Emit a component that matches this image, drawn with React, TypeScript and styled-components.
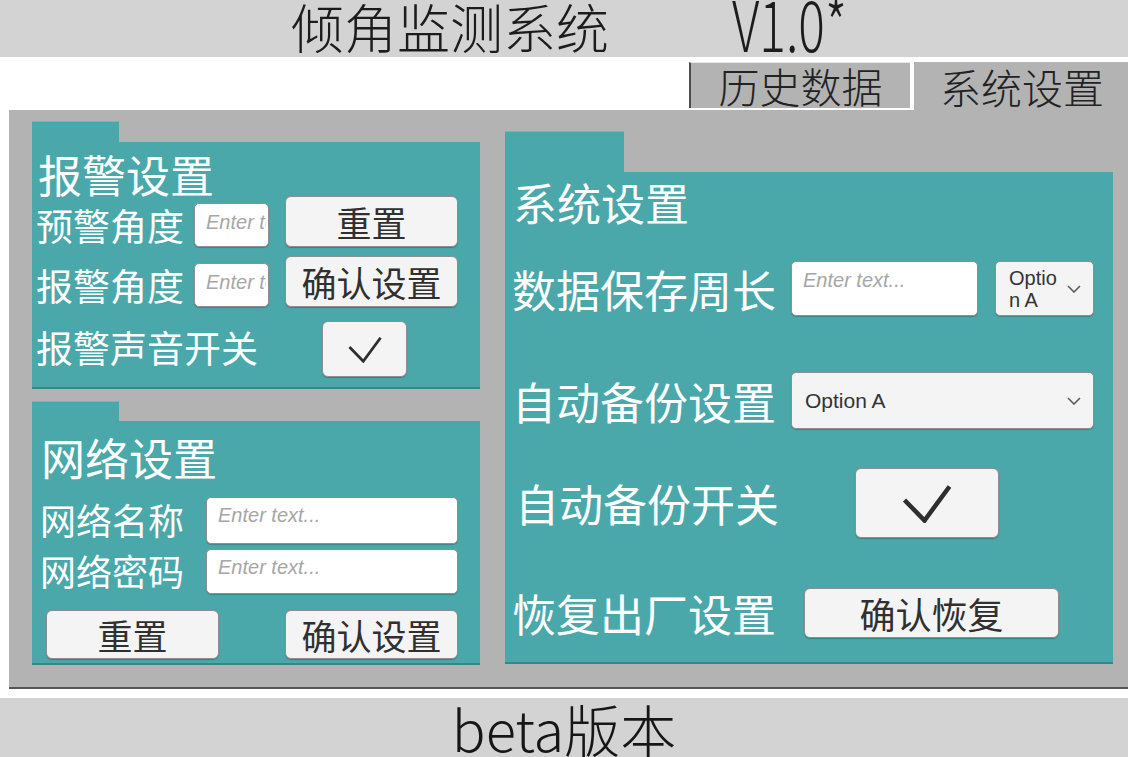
import React from 'react';
import styled, { createGlobalStyle } from 'styled-components';

const CJK = `'Noto Sans CJK SC', 'Noto Sans', sans-serif`;
const CJK_LIGHT = `'Noto Sans CJK SC Light', 'Noto Sans CJK SC DemiLight', 'Noto Sans CJK SC', 'Noto Sans', sans-serif`;
const LATIN = `'Liberation Sans', Arial, sans-serif`;
const TEAL = '#4aa8aa';
const GREY = '#b3b3b3';

const GlobalStyle = createGlobalStyle`
	html, body {
		margin: 0;
		padding: 0;
		background: #fff;
	}
	body {
		font-family: ${CJK};
	}
`;

const Screen = styled.div`
	width: 1128px;
	height: 757px;
	display: flex;
	flex-direction: column;
	background: #fff;
	overflow: hidden;
`;

const Header = styled.header`
	flex: none;
	height: 57px;
	box-sizing: border-box;
	padding-left: 12px;
	display: flex;
	justify-content: center;
	align-items: center;
	background: #d3d3d3;
	color: #1c1c1c;
	font-family: ${CJK_LIGHT};
	font-weight: 300;
	white-space: nowrap;
`;

const HeaderTitle = styled.span`
	font-size: 53px;
	line-height: 57px;
	margin-bottom: 5px;
`;

const Version = styled.span`
	display: inline-block;
	font-size: 70px;
	line-height: 57px;
	margin: 0 -45px 14px 123px;
	transform: scaleX(0.71);
	transform-origin: left center;
`;

const TabBar = styled.nav`
	flex: none;
	height: 53px;
	box-sizing: border-box;
	padding-top: 5px;
	display: flex;
	justify-content: flex-end;
	align-items: flex-start;
	gap: 4px;
	background: #fff;
`;

const Tab = styled.div<{ $active?: boolean }>`
	width: ${(p) => (p.$active ? 214 : 221)}px;
	height: ${(p) => (p.$active ? 48 : 46)}px;
	box-sizing: border-box;
	border-left: 2px solid ${(p) => (p.$active ? GREY : '#4d4d4d')};
	border-top: 1px solid ${(p) => (p.$active ? GREY : '#e9e9e9')};
	background: ${GREY};
	display: flex;
	justify-content: center;
	align-items: center;
	color: #222;
	font-family: ${CJK_LIGHT};
	font-size: 41px;
	line-height: 41px;
`;

const Workspace = styled.main`
	flex: none;
	height: 579px;
	box-sizing: border-box;
	margin-left: 9px;
	padding: 11px 0 0 23px;
	display: flex;
	align-items: flex-start;
	gap: 25px;
	background: ${GREY};
	border-bottom: 2px solid #555;
`;

const Spacer = styled.div`
	flex: none;
	height: 9px;
`;

const Footer = styled.footer`
	flex: none;
	height: 59px;
	display: flex;
	justify-content: center;
	background: #d3d3d3;
	color: #161616;
	font-family: ${CJK_LIGHT};
	font-size: 56px;
	line-height: 59px;
	font-weight: 300;
`;

const Column = styled.div<{ $top?: number }>`
	display: flex;
	flex-direction: column;
	gap: 12px;
	margin-top: ${(p) => p.$top ?? 0}px;
`;

const Folder = styled.section<{ $w: number }>`
	width: ${(p) => p.$w}px;
	display: flex;
	flex-direction: column;
`;

const FolderTab = styled.div<{ $w: number; $h: number }>`
	width: ${(p) => p.$w}px;
	height: ${(p) => p.$h}px;
	box-sizing: border-box;
	background: ${TEAL};
	border-top: 1px solid #5fc0c2;
`;

const FolderBody = styled.div<{ $h: number; $pad: number }>`
	height: ${(p) => p.$h}px;
	box-sizing: border-box;
	padding-left: ${(p) => p.$pad}px;
	display: flex;
	flex-direction: column;
	background: ${TEAL};
	border-bottom: 2px solid #3a8587;
	color: #fff;
`;

const PanelTitle = styled.h2<{ $top: number; $left?: number }>`
	margin: ${(p) => p.$top}px 0 0 ${(p) => p.$left ?? 0}px;
	font-size: 44px;
	line-height: 44px;
	font-weight: 400;
	white-space: nowrap;
`;

const Row = styled.div<{ $top: number; $h: number; $align?: string }>`
	margin-top: ${(p) => p.$top}px;
	height: ${(p) => p.$h}px;
	display: flex;
	align-items: ${(p) => p.$align ?? 'center'};
`;

const Label = styled.span<{ $w: number; $size: number; $drop?: number; $indent?: number }>`
	flex: none;
	width: ${(p) => p.$w}px;
	box-sizing: border-box;
	padding-left: ${(p) => p.$indent ?? 0}px;
	margin-bottom: ${(p) => p.$drop ?? 0}px;
	font-size: ${(p) => p.$size}px;
	line-height: ${(p) => p.$size}px;
	white-space: nowrap;
`;

const TextField = styled.input<{ $w: number; $h: number; $lift: number }>`
	flex: none;
	width: ${(p) => p.$w}px;
	height: ${(p) => p.$h}px;
	box-sizing: border-box;
	margin: 0;
	padding: 0 2px ${(p) => p.$lift}px 11px;
	background: #fff;
	border: 1px solid #8f8f8f;
	border-radius: 5px;
	box-shadow: 0 1px 1px rgba(0, 0, 0, 0.2);
	outline: none;
	font-family: ${LATIN};
	font-style: italic;
	font-size: 20px;
	color: #333;

	&::placeholder {
		color: #a6a6a6;
	}
`;

const Button = styled.button<{ $w: number; $h: number; $size?: number; $left?: number }>`
	flex: none;
	width: ${(p) => p.$w}px;
	height: ${(p) => p.$h}px;
	box-sizing: border-box;
	margin: 0 0 0 ${(p) => p.$left ?? 0}px;
	padding: 0;
	display: flex;
	justify-content: center;
	align-items: center;
	background: #f4f4f4;
	border: 1px solid #8e8e8e;
	border-radius: 6px;
	box-shadow: 0 1px 1px rgba(0, 0, 0, 0.25);
	color: #303030;
	font-family: ${CJK};
	font-size: ${(p) => p.$size ?? 35}px;
	line-height: 1;
	white-space: nowrap;
`;

const ButtonRow = styled.div`
	margin: 16px 0 0 6px;
	width: 412px;
	height: 49px;
	display: flex;
	justify-content: space-between;
`;

const Select = styled.div<{ $w: number; $h: number; $left?: number }>`
	flex: none;
	width: ${(p) => p.$w}px;
	height: ${(p) => p.$h}px;
	box-sizing: border-box;
	margin-left: ${(p) => p.$left ?? 0}px;
	padding: 0 12px 0 13px;
	display: flex;
	justify-content: space-between;
	align-items: center;
	background: #f4f4f4;
	border: 1px solid #8e8e8e;
	border-radius: 5px;
	box-shadow: 0 1px 1px rgba(0, 0, 0, 0.2);
	color: #333;
	font-family: ${LATIN};
	font-size: 20px;
`;

const SelectText = styled.span<{ $narrow?: boolean }>`
	width: ${(p) => (p.$narrow ? '52px' : 'auto')};
	word-break: break-all;
	line-height: 22px;
	font-size: ${(p) => (p.$narrow ? 20 : 21)}px;
`;

const Chevron = () => (
	<svg width="14" height="8" viewBox="0 0 14 8">
		<polyline points="1,1 7,7 13,1" fill="none" stroke="#5a5a5a" strokeWidth="1.6" />
	</svg>
);

const Check = ({ w, h, stroke }: { w: number; h: number; stroke: number }) => (
	<svg width={w} height={h} viewBox="0 0 48 39">
		<polyline
			points="1.5,16 21.5,36.5 46.5,2.5"
			fill="none"
			stroke="#2e2e2e"
			strokeWidth={stroke}
			strokeLinejoin="miter"
		/>
	</svg>
);

const AlarmPanel = () => (
	<Folder $w={448}>
		<FolderTab $w={87} $h={21} />
		<FolderBody $h={247} $pad={4}>
			<PanelTitle $top={10} $left={2}>
				报警设置
			</PanelTitle>
			<Row $top={0} $h={51} $align="flex-end">
				<Label $w={158} $size={37} $drop={3}>
					预警角度
				</Label>
				<TextField $w={75} $h={44} $lift={6} placeholder="Enter text..." />
				<Button $w={173} $h={51} $left={16}>
					重置
				</Button>
			</Row>
			<Row $top={9} $h={51} $align="flex-end">
				<Label $w={158} $size={37} $drop={3}>
					报警角度
				</Label>
				<TextField $w={75} $h={44} $lift={6} placeholder="Enter text..." />
				<Button $w={173} $h={51} $left={16}>
					确认设置
				</Button>
			</Row>
			<Row $top={14} $h={56}>
				<Label $w={286} $size={37} $drop={4}>
					报警声音开关
				</Label>
				<Button $w={85} $h={56}>
					<Check w={34} h={27} stroke={4} />
				</Button>
			</Row>
		</FolderBody>
	</Folder>
);

const NetworkPanel = () => (
	<Folder $w={448}>
		<FolderTab $w={87} $h={20} />
		<FolderBody $h={244} $pad={8}>
			<PanelTitle $top={14} $left={1}>
				网络设置
			</PanelTitle>
			<Row $top={18} $h={47}>
				<Label $w={166} $size={36} $drop={4}>
					网络名称
				</Label>
				<TextField $w={252} $h={47} $lift={10} placeholder="Enter text..." />
			</Row>
			<Row $top={5} $h={45}>
				<Label $w={166} $size={36} $drop={4}>
					网络密码
				</Label>
				<TextField $w={252} $h={45} $lift={9} placeholder="Enter text..." />
			</Row>
			<ButtonRow>
				<Button $w={173} $h={49}>
					重置
				</Button>
				<Button $w={173} $h={49}>
					确认设置
				</Button>
			</ButtonRow>
		</FolderBody>
	</Folder>
);

const SystemPanel = () => (
	<Folder $w={608}>
		<FolderTab $w={119} $h={41} />
		<FolderBody $h={492} $pad={7}>
			<PanelTitle $top={8} $left={1}>
				系统设置
			</PanelTitle>
			<Row $top={37} $h={55}>
				<Label $w={279} $size={44}>
					数据保存周长
				</Label>
				<TextField $w={187} $h={55} $lift={16} placeholder="Enter text..." />
				<Select $w={99} $h={55} $left={17}>
					<SelectText $narrow>Option A</SelectText>
					<Chevron />
				</Select>
			</Row>
			<Row $top={56} $h={57}>
				<Label $w={279} $size={44}>
					自动备份设置
				</Label>
				<Select $w={303} $h={57}>
					<SelectText>Option A</SelectText>
					<Chevron />
				</Select>
			</Row>
			<Row $top={39} $h={70}>
				<Label $w={343} $size={44} $indent={3}>
					自动备份开关
				</Label>
				<Button $w={144} $h={70}>
					<Check w={48} h={39} stroke={4.5} />
				</Button>
			</Row>
			<Row $top={50} $h={50}>
				<Label $w={292} $size={44}>
					恢复出厂设置
				</Label>
				<Button $w={255} $h={50} $size={36}>
					确认恢复
				</Button>
			</Row>
		</FolderBody>
	</Folder>
);

export default function App() {
	return (
		<>
			<GlobalStyle />
			<Screen>
				<Header>
					<HeaderTitle>倾角监测系统</HeaderTitle>
					<Version>V1.0*</Version>
				</Header>
				<TabBar>
					<Tab>历史数据</Tab>
					<Tab $active>系统设置</Tab>
				</TabBar>
				<Workspace>
					<Column>
						<AlarmPanel />
						<NetworkPanel />
					</Column>
					<Column $top={10}>
						<SystemPanel />
					</Column>
				</Workspace>
				<Spacer />
				<Footer>beta版本</Footer>
			</Screen>
		</>
	);
}
